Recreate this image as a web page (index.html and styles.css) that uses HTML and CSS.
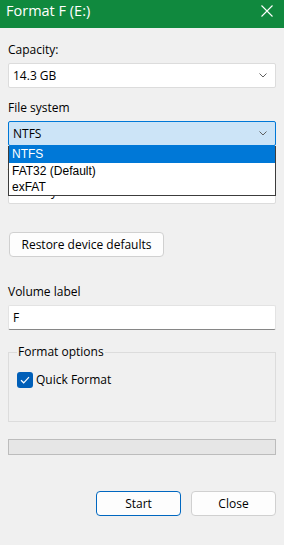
FILE: index.html
```html
<!DOCTYPE html>
<html lang="en">
<head>
  <meta charset="UTF-8" />
  <title>Format F (E:)</title>
  <link rel="stylesheet" href="styles.css">
</head>
<body>
  <div class="window">
    <div class="titlebar">
      <span class="title">Format F (E:)</span>
      <svg class="close" width="12" height="12" viewBox="0 0 12 12">
        <path d="M0.5 0.5 L11.5 11.5 M11.5 0.5 L0.5 11.5" stroke="#fff" stroke-width="1.1" fill="none" />
      </svg>
    </div>

    <div class="content">
      <div class="field-label">Capacity:</div>
      <div class="select">
        <span>14.3 GB</span>
        <svg class="chevron" width="8" height="5" viewBox="0 0 8 5"><path d="M0.5 0.5 L4 4 L7.5 0.5" stroke="#606060" fill="none" /></svg>
      </div>

      <div class="field-label">File system</div>
      <div class="select-wrap">
        <div class="select open">
          <span>NTFS</span>
          <svg class="chevron" width="8" height="5" viewBox="0 0 8 5"><path d="M0.5 0.5 L4 4 L7.5 0.5" stroke="#606060" fill="none" /></svg>
        </div>
        <ul class="dropdown">
          <li class="active">NTFS</li>
          <li>FAT32 (Default)</li>
          <li>exFAT</li>
        </ul>
      </div>

      <div class="field-label">Allocation unit size</div>
      <div class="select">
        <span>4096 bytes</span>
        <svg class="chevron" width="8" height="5" viewBox="0 0 8 5"><path d="M0.5 0.5 L4 4 L7.5 0.5" stroke="#606060" fill="none" /></svg>
      </div>

      <button class="btn restore">Restore device defaults</button>

      <div class="field-label volume">Volume label</div>
      <div class="textbox">F</div>

      <fieldset class="options">
        <legend>Format options</legend>
        <label class="check">
          <span class="box">
            <svg width="10" height="8" viewBox="0 0 10 8"><path d="M1 4.2 L3.7 6.8 L9 1.2" stroke="#fff" stroke-width="1.2" fill="none" /></svg>
          </span>
          Quick Format
        </label>
      </fieldset>

      <div class="progress"></div>

      <div class="actions">
        <button class="btn primary">Start</button>
        <button class="btn">Close</button>
      </div>
    </div>
  </div>
</body>
</html>
```

FILE: styles.css
```css
body {
  margin: 0;
  padding: 0;
  background-color: #f0f0f0;
  font-family: 'Open Sans', sans-serif;
  font-size: 12px;
  color: #000;
}

.window {
  width: 284px;
  height: 545px;
  overflow: hidden;
}

.titlebar {
  display: flex;
  justify-content: space-between;
  align-items: flex-start;
  height: 28px;
  background-color: #10893e;
  color: white;
}

.title {
  padding: 1px 0 0 6px;
  font-size: 14.5px;
  line-height: 20px;
}

.close {
  margin: 5px 11px 0 0;
}

.content {
  padding: 14px 8px 0 8px;
}

.field-label {
  line-height: 16px;
  margin-bottom: 5px;
}

.select,
.textbox {
  display: flex;
  justify-content: space-between;
  align-items: center;
  box-sizing: border-box;
  height: 25px;
  padding: 0 6px 0 4px;
  background-color: white;
  border: 1px solid #dcdcdc;
  border-radius: 2px;
  margin-bottom: 12px;
}

.chevron {
  margin-right: 2px;
}

.select-wrap {
  position: relative;
}

.select.open {
  background-color: #cce4f7;
  border-color: #0078d7;
}

.dropdown {
  position: absolute;
  top: 25px;
  left: 0;
  right: 0;
  margin: 0;
  padding: 0;
  list-style: none;
  background-color: white;
  border: 1px solid #3c3c3c;
  border-top: none;
  font-family: 'Liberation Sans', sans-serif;
  font-size: 12px;
  z-index: 2;
}

.dropdown li {
  height: 17px;
  line-height: 17px;
  padding-left: 3px;
}

.dropdown li:last-child {
  height: 15px;
  line-height: 15px;
}

.dropdown li.active {
  background-color: #0078d7;
  color: white;
}

.btn {
  box-sizing: border-box;
  height: 25px;
  padding: 0 10px;
  background-color: #fdfdfd;
  border: 1px solid #d0d0d0;
  border-radius: 4px;
  font-family: 'Open Sans', sans-serif;
  font-size: 12px;
  color: #000;
}

.restore {
  display: block;
  margin: 28px 0 0 1px;
  width: 155px;
}

.volume {
  margin-top: 27px;
}

.textbox {
  border-color: #e3e3e3;
  border-bottom-color: #868686;
  margin-bottom: 14px;
}

.options {
  margin: 0;
  padding: 0 8px 33px 8px;
  border: 1px solid #dcdcdc;
  min-width: 0;
}

.options legend {
  padding: 0 1px;
  line-height: 16px;
}

.check {
  display: flex;
  align-items: center;
  gap: 3px;
  margin-top: 12px;
  line-height: 16px;
}

.box {
  display: flex;
  align-items: center;
  justify-content: center;
  width: 16px;
  height: 16px;
  background-color: #005fb8;
  border-radius: 3px;
}

.progress {
  box-sizing: border-box;
  height: 16px;
  margin-top: 17px;
  background-color: #e6e6e6;
  border: 1px solid #bcbcbc;
}

.actions {
  display: flex;
  justify-content: flex-end;
  gap: 10px;
  margin-top: 36px;
}

.actions .btn {
  width: 85px;
}

.btn.primary {
  border-color: #0067c0;
}
```
